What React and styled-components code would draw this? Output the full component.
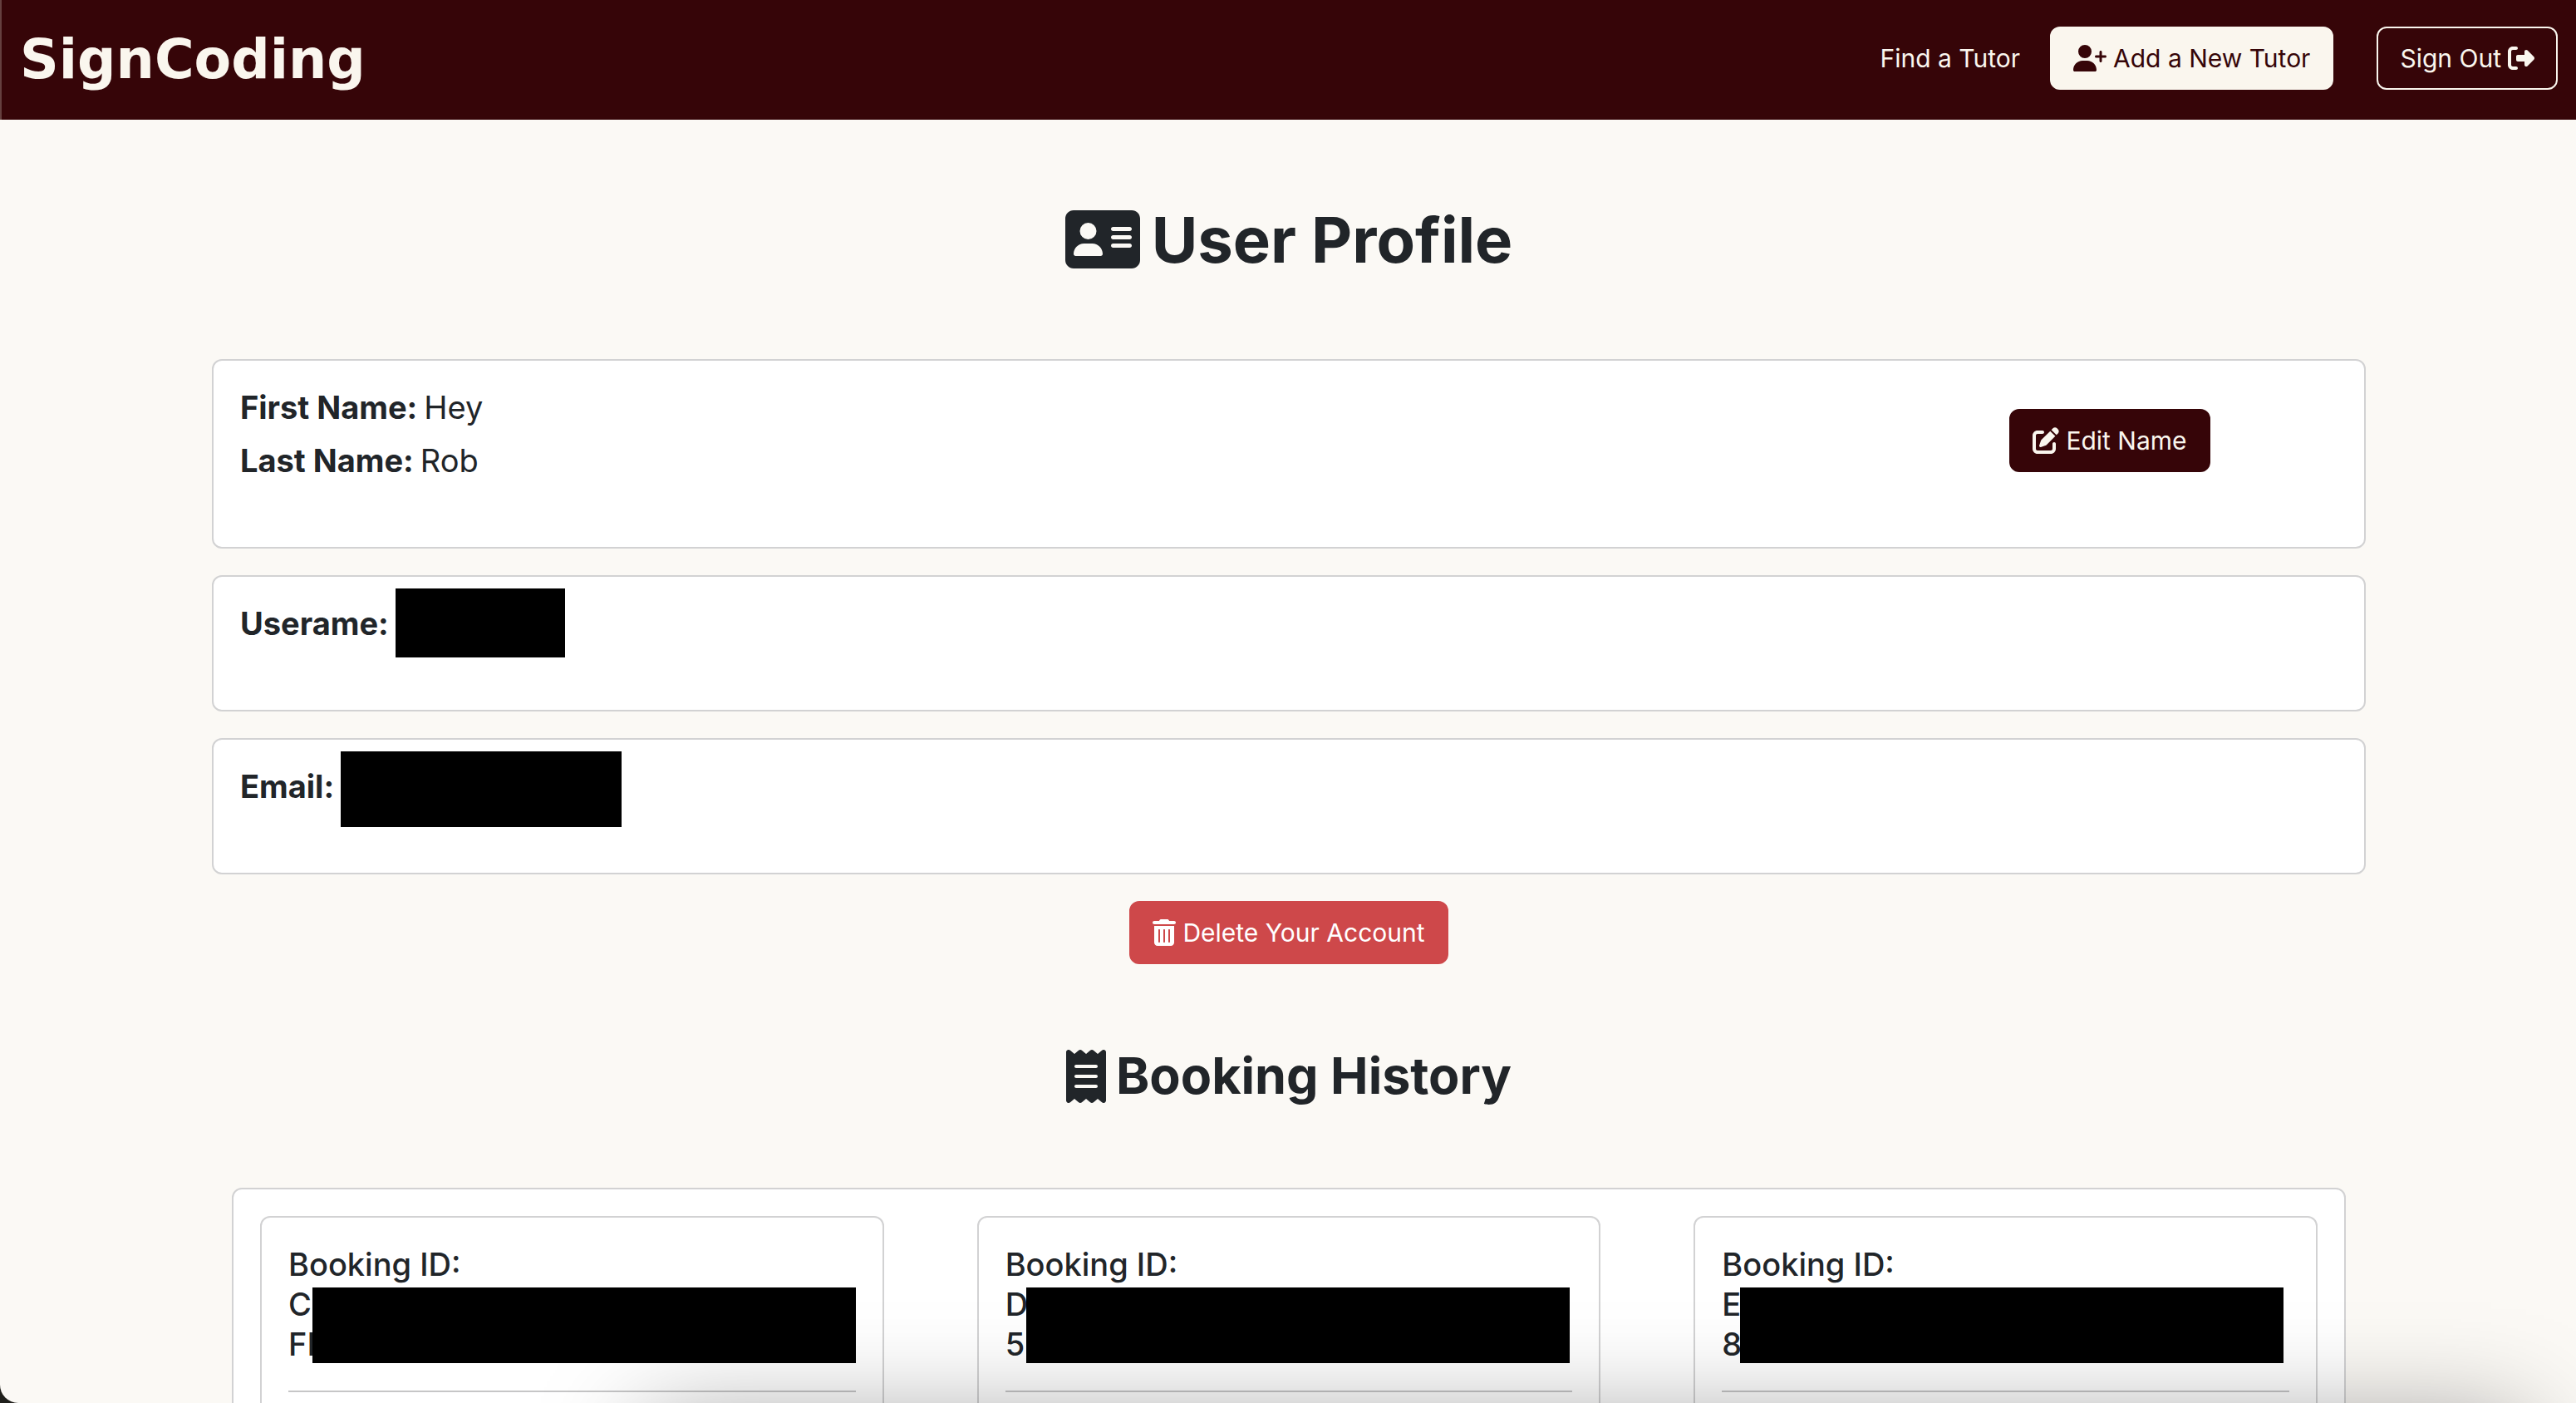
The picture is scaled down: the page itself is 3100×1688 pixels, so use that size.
import React from "react";
import styled, { createGlobalStyle } from "styled-components";
import {
  FaAddressCard,
  FaPenToSquare,
  FaReceipt,
  FaRightFromBracket,
  FaTrashCan,
  FaUserPlus,
} from "react-icons/fa6";

const ink = "#212529";
const maroon = "#360508";
const cream = "#faf6ee";
const line = "#d2d2d3";

const GlobalStyle = createGlobalStyle`
  *, *::before, *::after { box-sizing: border-box; }
  html { background: #20201c; }
  body {
    margin: 0;
    height: 100vh;
    overflow: hidden;
    font-family: Inter, "Liberation Sans", sans-serif;
    font-size: 30px;
    line-height: 48px;
    color: ${ink};
  }
`;

const Window = styled.div`
  position: relative;
  height: 100vh;
  overflow: hidden;
  padding-left: 2px;
  border-bottom-left-radius: 22px;
  background: #fbf9f5;
`;

const NavBar = styled.header`
  display: flex;
  align-items: center;
  justify-content: space-between;
  height: 144px;
  margin-left: -2px;
  padding: 0 22px;
  border-left: 2px solid #65403f;
  background: ${maroon};
`;

const Brand = styled.a`
  font-family: "DejaVu Sans", sans-serif;
  font-size: 65px;
  font-weight: 700;
  line-height: 96px;
  color: ${cream};
  text-decoration: none;
`;

const NavLinks = styled.nav`
  display: flex;
  align-items: center;
  height: 76px;
  margin-bottom: 4px;
`;

const NavLink = styled.a`
  margin-right: 36px;
  color: ${cream};
  text-decoration: none;
`;

const Button = styled.button`
  display: inline-flex;
  align-items: center;
  gap: 8px;
  height: 76px;
  padding: 0 26px;
  border: 2px solid ${(p) => p.$border || p.$bg};
  border-radius: 12px;
  background: ${(p) => p.$bg};
  color: ${(p) => p.$color};
  font: inherit;
  white-space: nowrap;
  cursor: pointer;

  svg {
    flex: none;
    width: ${(p) => p.$icon || 32}px;
    height: 32px;
  }
`;

const NavButtons = styled.div`
  display: flex;
  gap: 52px;
`;

const Main = styled.main`
  display: flex;
  flex-direction: column;
  align-items: center;
  max-width: 2592px;
  margin: 0 auto;
`;

const PageTitle = styled.h1`
  display: flex;
  align-items: center;
  gap: 14px;
  margin: 96px 0;
  font-size: 76px;
  font-weight: 700;
  line-height: 96px;

  svg {
    flex: none;
    width: 90px;
    height: 80px;
  }
`;

const SectionTitle = styled.h2`
  display: flex;
  align-items: center;
  gap: 12px;
  margin: 96px 0;
  font-size: 61px;
  font-weight: 700;
  line-height: 77px;

  svg {
    flex: none;
    width: 48px;
    height: 64px;
  }
`;

const Card = styled.section`
  display: flex;
  width: 100%;
  margin-bottom: 32px;
  padding: 32px 32px 64px;
  border: 2px solid ${line};
  border-radius: 12px;
  background: #fff;
`;

const Fields = styled.div`
  flex: 1;
`;

const Field = styled.p`
  display: flex;
  gap: 8px;
  height: 48px;
  margin: 0 0 16px;
  font-size: 38px;
  line-height: 48px;
`;

const Redaction = styled.span`
  flex: none;
  width: ${(p) => p.$width}px;
  height: ${(p) => p.$height}px;
  margin-top: -18px;
  background: #000;
`;

const CardAction = styled.div`
  display: flex;
  justify-content: center;
  align-items: flex-start;
  width: 548px;
  padding-top: 26px;
`;

const Bookings = styled.section`
  display: grid;
  grid-template-columns: repeat(3, 1fr);
  gap: 112px;
  width: calc(100% - 48px);
  padding: 32px 32px 64px;
  border: 2px solid ${line};
  border-radius: 12px;
  background: #fff;
`;

const Booking = styled.article`
  height: 420px;
  padding: 32px;
  border: 2px solid ${line};
  border-radius: 12px;
`;

const BookingTitle = styled.h3`
  position: relative;
  margin: 0;
  padding-bottom: 32px;
  border-bottom: 2px solid #c6c6c7;
  font-size: 38px;
  font-weight: 500;
  line-height: 48px;
`;

const IdLine = styled.span`
  display: block;
`;

const IdCover = styled.span`
  position: absolute;
  top: 52px;
  left: ${(p) => p.$left}px;
  width: 654px;
  height: 91px;
  background: #000;
`;

const DockShadow = styled.div`
  position: absolute;
  top: 100%;
  left: 776px;
  right: 60px;
  height: 400px;
  margin-top: 24px;
  box-shadow: 0 0 120px rgba(0, 0, 0, 0.4);
  pointer-events: none;
`;

const bookings = [
  { first: "C", second: "FI", cover: 29 },
  { first: "D", second: "5", cover: 25 },
  { first: "E", second: "8", cover: 22 },
];

export default function App() {
  return (
    <Window>
      <GlobalStyle />
      <NavBar>
        <Brand href="#home">SignCoding</Brand>
        <NavLinks>
          <NavLink href="#tutors">Find a Tutor</NavLink>
          <NavButtons>
            <Button $bg={cream} $color={maroon} $icon={40}>
              <FaUserPlus />
              Add a New Tutor
            </Button>
            <Button $bg={maroon} $border={cream} $color={cream}>
              Sign Out
              <FaRightFromBracket />
            </Button>
          </NavButtons>
        </NavLinks>
      </NavBar>
      <Main>
        <PageTitle>
          <FaAddressCard />
          User Profile
        </PageTitle>
        <Card>
          <Fields>
            <Field>
              <strong>First Name:</strong> Hey
            </Field>
            <Field>
              <strong>Last Name:</strong> Rob
            </Field>
          </Fields>
          <CardAction>
            <Button $bg={maroon} $color={cream}>
              <FaPenToSquare />
              Edit Name
            </Button>
          </CardAction>
        </Card>
        <Card>
          <Field>
            <strong>Userame:</strong>
            <Redaction $width={204} $height={83} />
          </Field>
        </Card>
        <Card>
          <Field>
            <strong>Email:</strong>
            <Redaction $width={338} $height={91} />
          </Field>
        </Card>
        <Button $bg="#ce484a" $color="#fff" $icon={28}>
          <FaTrashCan />
          Delete Your Account
        </Button>
        <SectionTitle>
          <FaReceipt />
          Booking History
        </SectionTitle>
        <Bookings>
          {bookings.map((b) => (
            <Booking key={b.first}>
              <BookingTitle>
                Booking ID:
                <IdLine>{b.first}</IdLine>
                <IdLine>{b.second}</IdLine>
                <IdCover $left={b.cover} />
              </BookingTitle>
            </Booking>
          ))}
        </Bookings>
      </Main>
      <DockShadow />
    </Window>
  );
}
